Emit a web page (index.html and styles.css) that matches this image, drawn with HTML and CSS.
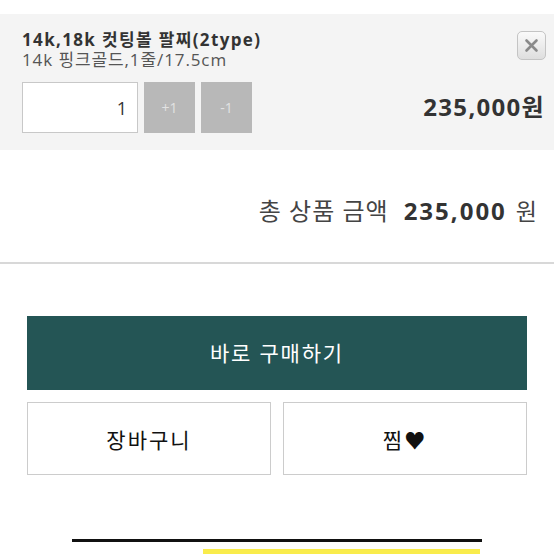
FILE: index.html
```html
<!DOCTYPE html>
<html lang="ko">
<head>
    <meta charset="UTF-8">
    <meta name="viewport" content="width=device-width, initial-scale=1.0">
    <title>상품 옵션</title>
    <link rel="stylesheet" href="styles.css">
</head>
<body>
    <div class="option">
        <div class="option-head">
            <div class="option-info">
                <div class="option-title">14k,18k 컷팅볼 팔찌(2type)</div>
                <div class="option-sub">14k 핑크골드,1줄/17.5cm</div>
            </div>
            <button class="close-button" aria-label="삭제">
                <svg width="15" height="15" viewBox="0 0 15 15">
                    <path d="M2.5 2.5 L12.5 12.5 M12.5 2.5 L2.5 12.5" stroke="#8a8a8a" stroke-width="2.6" stroke-linecap="round"/>
                </svg>
            </button>
        </div>
        <div class="option-controls">
            <div class="qty">
                <input class="qty-input" type="text" value="1">
                <button class="qty-button">+1</button>
                <button class="qty-button">-1</button>
            </div>
            <div class="option-price">235,000원</div>
        </div>
    </div>

    <div class="total">
        <span class="total-label">총 상품 금액</span>
        <span class="total-amount">235,000</span>
        <span class="total-unit">원</span>
    </div>

    <div class="actions">
        <button class="buy-button">바로 구매하기</button>
        <div class="sub-actions">
            <button class="sub-button">장바구니</button>
            <button class="sub-button">찜♥</button>
        </div>
    </div>

    <div class="bottom">
        <div class="bottom-line"></div>
        <div class="bottom-row">
            <div class="kakao-box"></div>
        </div>
    </div>
</body>
</html>
```

FILE: styles.css
```css
body {
    margin: 0;
    background-color: white;
    font-family: "Open Sans", "Noto Sans CJK KR", sans-serif;
    color: #333;
}
button {
    font-family: inherit;
}
.option {
    margin-top: 14px;
    background-color: #f4f4f4;
    padding: 16px 8px 17px 22px;
}
.option-head {
    display: flex;
    justify-content: space-between;
    align-items: flex-start;
}
.option-title {
    font-size: 17px;
    font-weight: bold;
    line-height: 20px;
    color: #333;
    letter-spacing: 1.35px;
}
.option-sub {
    font-size: 17px;
    line-height: 19px;
    color: #555;
    letter-spacing: 0.9px;
}
.close-button {
    width: 29px;
    height: 29px;
    margin-top: 1px;
    padding: 0;
    border: 1px solid #c4c4c4;
    border-radius: 5px;
    background: linear-gradient(#fafafa, #dedede);
    display: flex;
    align-items: center;
    justify-content: center;
}
.option-controls {
    display: flex;
    justify-content: space-between;
    align-items: center;
    margin-top: 13px;
}
.qty {
    display: flex;
    gap: 6px;
}
.qty-input {
    width: 116px;
    height: 51px;
    box-sizing: border-box;
    border: 1px solid #c8c8c8;
    background-color: white;
    text-align: right;
    font-family: inherit;
    font-size: 18px;
    color: #333;
    padding: 0 10px;
}
.qty-button {
    width: 51px;
    height: 51px;
    border: none;
    background-color: #b8b8b8;
    color: #e2e2e2;
    font-size: 14px;
}
.option-price {
    font-size: 24px;
    font-weight: bold;
    color: #333;
    letter-spacing: 1.3px;
    margin: 0 1px 4px 0;
}
.total {
    display: flex;
    justify-content: flex-end;
    align-items: baseline;
    padding: 42px 17px 0 0;
    height: 70px;
    border-bottom: 2px solid #d8d8d8;
    font-size: 24px;
    color: #444;
}
.total-label {
    letter-spacing: 1px;
}
.total-amount {
    font-weight: bold;
    font-size: 24px;
    color: #333;
    letter-spacing: 2px;
    margin-left: 15px;
}
.total-unit {
    margin-left: 9px;
    font-size: 23px;
}
.actions {
    padding: 52px 27px 0;
}
.buy-button {
    display: block;
    width: 100%;
    height: 74px;
    border: none;
    background-color: #245555;
    color: white;
    font-size: 21px;
    letter-spacing: 1.8px;
    padding-bottom: 4px;
}
.sub-actions {
    display: flex;
    gap: 12px;
    margin-top: 12px;
}
.sub-button {
    flex: 1;
    height: 73px;
    border: 1px solid #cccccc;
    background-color: white;
    color: #111;
    font-size: 21px;
    letter-spacing: 2px;
}
.bottom {
    padding: 64px 72px 0;
}
.bottom-line {
    height: 3px;
    background-color: #111;
}
.bottom-row {
    display: flex;
    justify-content: flex-end;
    padding: 7px 2px 0 0;
}
.kakao-box {
    width: 277px;
    height: 20px;
    background-color: #f9ec4c;
}
```
